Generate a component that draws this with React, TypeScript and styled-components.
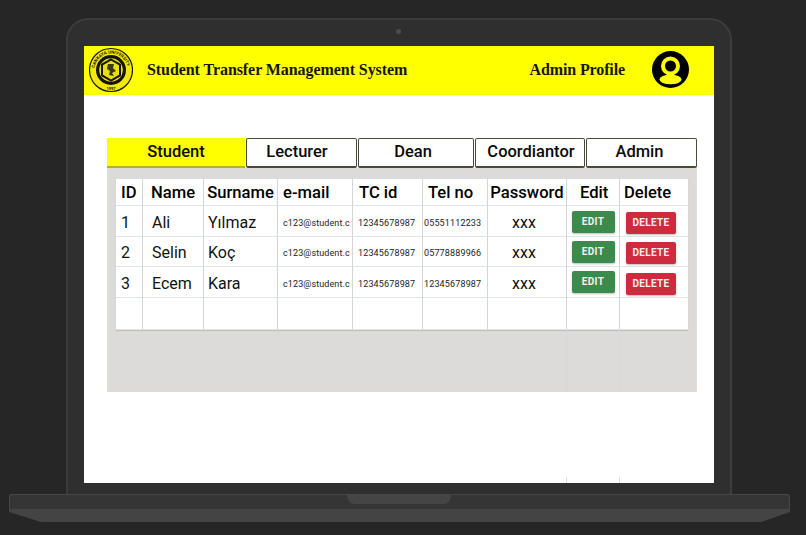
import React from "react";
import styled, { createGlobalStyle } from "styled-components";

const Global = createGlobalStyle`
  html, body { margin: 0; padding: 0; background: #262626; }
  body { font-family: Roboto, "Liberation Sans", sans-serif; color: #000; }
  * { box-sizing: border-box; }
`;
const Page = styled.div`
  width: 806px; height: 535px; padding-top: 18px; overflow: hidden; background: #262626;
`;
const Lid = styled.div`
  position: relative; width: 666px; height: 476px; margin-left: 66px;
  padding: 26px 16px 9px;
  background: #2f2f2f; border: 2px solid #3c3c3c; border-bottom: none;
  border-radius: 22px 22px 0 0;
`;
const Camera = styled.span`
  position: absolute; top: 9px; left: 328px; width: 5px; height: 5px;
  border-radius: 50%; background: #4c4c4c;
`;
const Screen = styled.div`
  position: relative; width: 630px; height: 437px; background: #fff; overflow: hidden;
`;
const Header = styled.header`
  display: flex; align-items: center; height: 49px; padding: 0 25px 2px 5px; background: #ffff00;
`;
const Title = styled.h1`
  margin: 0 0 0 14px; font: 700 16px "Liberation Serif", serif; letter-spacing: -0.07px; color: #16160a;
`;
const ProfileName = styled.span`
  margin-left: auto; font: 700 16px "Liberation Serif", serif; letter-spacing: -0.12px; color: #16160a;
`;
const Avatar = styled.svg`
  width: 37px; height: 37px; margin: 0 0 0 27px; flex: none;
`;
const Logo = styled.svg`
  width: 44px; height: 46px; flex: none;
`;
const Main = styled.main`
  padding: 43px 0 0 23px; width: 613px;
`;
const Tabs = styled.nav`
  display: flex; height: 30px; gap: 1px;
`;
const Tab = styled.div<{ $w: number; $active?: boolean; $left: number; $right: number }>`
  width: ${p => p.$w}px; display: flex; align-items: center; justify-content: center;
  padding: 0 ${p => p.$right}px ${p => (p.$active ? 2 : 3)}px ${p => p.$left}px;
  font-size: 16.5px; font-weight: 500; color: #0a0a0a;
  background: ${p => (p.$active ? "#ffff00" : "#fff")};
  border: ${p => (p.$active ? "none" : "1px solid #4b4a38")};
  border-bottom: 2px solid ${p => (p.$active ? "#b3b31c" : "#4b4a38")};
  border-radius: ${p => (p.$active ? "0" : "2px")};
`;
const Panel = styled.section`
  position: relative; width: 590px; height: 224px; padding: 11px 9px; background: #dddbda;
`;
const Table = styled.div`
  display: grid; width: 572px; height: 151px; background: #fff;
  grid-template-columns: 27px 61px 74px 75px 70px 65px 79px 53px 68px;
  grid-template-rows: 27px 31px 30px 31px 32px;
  border-bottom: 1px solid #bdbcbc;
  box-shadow: 0 1px 1px rgba(0,0,0,.12);
`;
const Cell = styled.div<{
  $center?: boolean; $pad?: number; $size?: number; $head?: boolean; $drop?: number; $last?: boolean; $spacing?: number;
}>`
  display: flex; align-items: center; min-width: 0; overflow: hidden; white-space: nowrap;
  justify-content: ${p => (p.$center ? "center" : "flex-start")};
  padding-left: ${p => p.$pad ?? 0}px;
  padding-top: ${p => p.$drop ?? 0}px;
  font-size: ${p => p.$size ?? (p.$head ? 16.6 : 16)}px;
  font-weight: ${p => (p.$head ? 500 : 400)};
  letter-spacing: ${p => p.$spacing ?? 0}px;
  color: ${p => (p.$head ? "#000" : p.$size ? "#222" : "#111")};
  border-right: ${p => (p.$last ? "none" : "1px solid #d3d6d6")};
  border-bottom: 1px solid #dfe4e4;
`;
const ActionButton = styled.div<{ $color: string; $w: number }>`
  display: flex; align-items: center; justify-content: center; flex: none;
  width: ${p => p.$w}px; height: 22px; padding-bottom: 1px;
  border-radius: 2px; background: ${p => p.$color}; color: #f2f2f2;
  font-size: 10px; font-weight: 700; letter-spacing: 0.3px;
  box-shadow: 0 1px 2px rgba(0,0,0,.25);
`;
const GhostLine = styled.span<{ $x: number; $top: number; $h: number; $c: string }>`
  position: absolute; left: ${p => p.$x}px; top: ${p => p.$top}px; width: 1px; height: ${p => p.$h}px;
  background: ${p => p.$c};
`;
const Base = styled.div`
  position: relative; width: 781px; height: 28px; margin-left: 9px;
`;
const BaseShape = styled.svg`
  display: block; width: 781px; height: 28px;
`;
const Notch = styled.span`
  position: absolute; left: 338px; top: 1px; width: 104px; height: 9px;
  background: #454545; border-radius: 0 0 8px 8px;
`;

const tabs = [
  { label: "Student", w: 138, left: 0, right: 0 },
  { label: "Lecturer", w: 111, left: 0, right: 9 },
  { label: "Dean", w: 116, left: 0, right: 6 },
  { label: "Coordiantor", w: 110, left: 2, right: 0 },
  { label: "Admin", w: 111, left: 0, right: 4 },
];
const students = [
  { id: "1", name: "Ali", surname: "Yılmaz", tel: "05551112233", editDrop: 2, deleteDrop: 4 },
  { id: "2", name: "Selin", surname: "Koç", tel: "05778889966", editDrop: 0, deleteDrop: 2 },
  { id: "3", name: "Ecem", surname: "Kara", tel: "12345678987", editDrop: 0, deleteDrop: 3 },
];

const UniversityLogo = () => (
  <Logo viewBox="0 0 44 46">
    <defs>
      <path id="arc" d="M5.5 23 A16.5 16.5 0 0 1 38.5 23" />
    </defs>
    <circle cx="22" cy="23" r="21.5" fill="#f1e90a" stroke="#1a1a05" strokeWidth="1.2" />
    <circle cx="22" cy="23" r="15" fill="#15150a" />
    <circle cx="22" cy="23" r="11.8" fill="#e8de10" />
    <path d="M22 12.5 L31 17.7 V28.3 L22 33.5 L13 28.3 V17.7 Z" fill="#e8de10" stroke="#15150a" strokeWidth="2" />
    <path d="M19 17 H25 L24 21 L27 24 L23 26 L25 29 L20 28 L21 24 L18 22 Z" fill="#3a3a1a" />
    <text fontSize="4.4" fontWeight="700" fill="#15150a" fontFamily="Roboto, sans-serif">
      <textPath href="#arc" startOffset="2">CANKAYA UNIVERSITY</textPath>
    </text>
    <text x="22" y="43" textAnchor="middle" fontSize="4" fontWeight="700" fill="#15150a" fontFamily="Roboto, sans-serif">1997</text>
  </Logo>
);

const UserIcon = () => (
  <Avatar viewBox="0 0 37 37">
    <circle cx="18.5" cy="18.5" r="18.5" fill="#000" />
    <circle cx="18.5" cy="15" r="7.5" fill="none" stroke="#ffff00" strokeWidth="4" />
    <ellipse cx="18.5" cy="28.5" rx="11" ry="4.8" fill="#ffff00" />
  </Avatar>
);

export default function App() {
  return (
    <Page>
      <Global />
      <Lid>
        <Camera />
        <Screen>
          <Header>
            <UniversityLogo />
            <Title>Student Transfer Management System</Title>
            <ProfileName>Admin Profile</ProfileName>
            <UserIcon />
          </Header>
          <Main>
            <Tabs>
              {tabs.map((t, i) => (
                <Tab key={t.label} $w={t.w} $left={t.left} $right={t.right} $active={i === 0}>{t.label}</Tab>
              ))}
            </Tabs>
            <Panel>
              <Table>
                <Cell $head $pad={5}>ID</Cell>
                <Cell $head $center>Name</Cell>
                <Cell $head $center>Surname</Cell>
                <Cell $head $pad={5}>e-mail</Cell>
                <Cell $head $pad={6}>TC id</Cell>
                <Cell $head $pad={5}>Tel no</Cell>
                <Cell $head $center>Password</Cell>
                <Cell $head $pad={13}>Edit</Cell>
                <Cell $head $pad={4} $last>Delete</Cell>
                {students.map(s => (
                  <React.Fragment key={s.id}>
                    <Cell $pad={5} $drop={2}>{s.id}</Cell>
                    <Cell $pad={9} $drop={2}>{s.name}</Cell>
                    <Cell $pad={4} $drop={2}>{s.surname}</Cell>
                    <Cell $pad={5} $size={9} $spacing={0.1} $drop={3}>c123@student.c</Cell>
                    <Cell $pad={5} $size={9} $spacing={0.15} $drop={3}>12345678987</Cell>
                    <Cell $pad={1} $size={9} $spacing={0.15} $drop={3}>{s.tel}</Cell>
                    <Cell $pad={24} $drop={2}>xxx</Cell>
                    <Cell $center $drop={s.editDrop}>
                      <ActionButton $color="#3c8a4c" $w={43}>EDIT</ActionButton>
                    </Cell>
                    <Cell $pad={6} $last $drop={s.deleteDrop}>
                      <ActionButton $color="#cf2b3f" $w={50}>DELETE</ActionButton>
                    </Cell>
                  </React.Fragment>
                ))}
                {Array.from({ length: 9 }, (_, i) => (
                  <Cell key={i} $last={i === 8} />
                ))}
              </Table>
              <GhostLine $x={459} $top={162} $h={62} $c="#d6d6d6" />
              <GhostLine $x={512} $top={162} $h={62} $c="#d8d8d8" />
            </Panel>
          </Main>
          <GhostLine $x={482} $top={431} $h={6} $c="#dcdcdc" />
          <GhostLine $x={535} $top={431} $h={6} $c="#dcdcdc" />
        </Screen>
      </Lid>
      <Base>
        <BaseShape viewBox="0 0 781 28">
          <path d="M3 0 H778 Q781 0 781 3 V18 L752 28 H32 L0 18 V3 Q0 0 3 0 Z" fill="#444444" />
          <path d="M3 0 H778 Q781 0 781 3 V15 H0 V3 Q0 0 3 0 Z" fill="#353535" />
          <path d="M3 .5 H778 Q780.5 .5 780.5 3 V15 M.5 15 V3 Q.5 .5 3 .5" fill="none" stroke="#474747" />
        </BaseShape>
        <Notch />
      </Base>
    </Page>
  );
}
